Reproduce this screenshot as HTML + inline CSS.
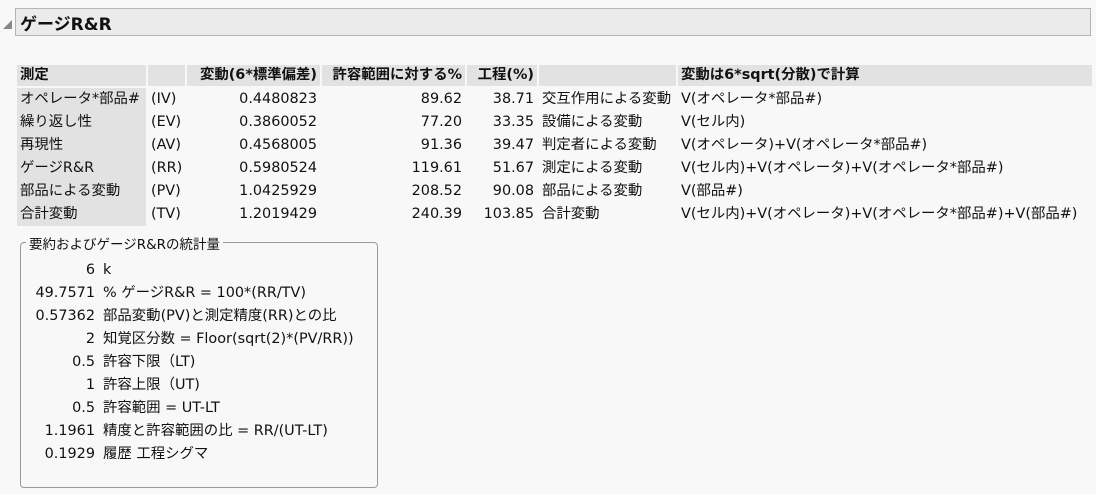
<!DOCTYPE html>
<html><head><meta charset="utf-8"><style>
body{margin:0;width:1096px;height:494px;background:#f8f8f8;font-family:"DejaVu Sans","Noto Sans CJK JP",sans-serif;font-size:14.4px;color:#111;position:relative;overflow:hidden}
.hdr{position:absolute;left:15px;top:8px;width:1076px;height:28px;background:#ebebeb;border:1px solid #b5b5b5;box-sizing:border-box}
.hdr span{position:absolute;left:4px;top:1px;font-weight:bold;font-size:17px}
.tri{position:absolute;left:3px;top:20px;width:0;height:0;border-left:9px solid transparent;border-bottom:9px solid #888}
.c{position:absolute;height:21px;line-height:23px;white-space:nowrap;box-sizing:border-box;padding:0 3px}
.h{background:#e2e2e2;font-weight:bold;top:65px;line-height:21px}
.g{background:#e2e2e2}
.r{text-align:right}
.box{position:absolute;left:20px;top:242px;width:358px;height:246px;border:1px solid #999;border-radius:4px;box-sizing:border-box}
.lg{position:absolute;left:26px;top:233px;background:#f8f8f8;padding:0 3px;font-size:13.5px}
.s{position:absolute;height:20px;line-height:21px;white-space:nowrap}
</style></head><body>
<div class="tri"></div>
<div class="hdr"><span>ゲージR&amp;R</span></div>

<div class="c h" style="left:17px;width:129px">測定</div>
<div class="c h" style="left:148px;width:37px"></div>
<div class="c h r" style="left:187px;width:133px">変動(6*標準偏差)</div>
<div class="c h r" style="left:322px;width:143px">許容範囲に対する%</div>
<div class="c h r" style="left:467px;width:70px">工程(%)</div>
<div class="c h" style="left:539px;width:137px"></div>
<div class="c h" style="left:678px;width:414px">変動は6*sqrt(分散)で計算</div>

<div class="c g" style="left:17px;top:88px;width:129px;height:138px;padding:0"></div>

<div class="c" style="left:17px;top:88px">オペレータ*部品#</div><div class="c" style="left:148px;top:88px">(IV)</div><div class="c r" style="left:187px;top:88px;width:133px">0.4480823</div><div class="c r" style="left:322px;top:88px;width:143px">89.62</div><div class="c r" style="left:467px;top:88px;width:70px">38.71</div><div class="c" style="left:539px;top:88px">交互作用による変動</div><div class="c" style="left:678px;top:88px">V(オペレータ*部品#)</div>

<div class="c" style="left:17px;top:111px">繰り返し性</div><div class="c" style="left:148px;top:111px">(EV)</div><div class="c r" style="left:187px;top:111px;width:133px">0.3860052</div><div class="c r" style="left:322px;top:111px;width:143px">77.20</div><div class="c r" style="left:467px;top:111px;width:70px">33.35</div><div class="c" style="left:539px;top:111px">設備による変動</div><div class="c" style="left:678px;top:111px">V(セル内)</div>

<div class="c" style="left:17px;top:134px">再現性</div><div class="c" style="left:148px;top:134px">(AV)</div><div class="c r" style="left:187px;top:134px;width:133px">0.4568005</div><div class="c r" style="left:322px;top:134px;width:143px">91.36</div><div class="c r" style="left:467px;top:134px;width:70px">39.47</div><div class="c" style="left:539px;top:134px">判定者による変動</div><div class="c" style="left:678px;top:134px">V(オペレータ)+V(オペレータ*部品#)</div>

<div class="c" style="left:17px;top:157px">ゲージR&amp;R</div><div class="c" style="left:148px;top:157px">(RR)</div><div class="c r" style="left:187px;top:157px;width:133px">0.5980524</div><div class="c r" style="left:322px;top:157px;width:143px">119.61</div><div class="c r" style="left:467px;top:157px;width:70px">51.67</div><div class="c" style="left:539px;top:157px">測定による変動</div><div class="c" style="left:678px;top:157px">V(セル内)+V(オペレータ)+V(オペレータ*部品#)</div>

<div class="c" style="left:17px;top:180px">部品による変動</div><div class="c" style="left:148px;top:180px">(PV)</div><div class="c r" style="left:187px;top:180px;width:133px">1.0425929</div><div class="c r" style="left:322px;top:180px;width:143px">208.52</div><div class="c r" style="left:467px;top:180px;width:70px">90.08</div><div class="c" style="left:539px;top:180px">部品による変動</div><div class="c" style="left:678px;top:180px">V(部品#)</div>

<div class="c" style="left:17px;top:203px">合計変動</div><div class="c" style="left:148px;top:203px">(TV)</div><div class="c r" style="left:187px;top:203px;width:133px">1.2019429</div><div class="c r" style="left:322px;top:203px;width:143px">240.39</div><div class="c r" style="left:467px;top:203px;width:70px">103.85</div><div class="c" style="left:539px;top:203px">合計変動</div><div class="c" style="left:678px;top:203px">V(セル内)+V(オペレータ)+V(オペレータ*部品#)+V(部品#)</div>

<div class="box"></div>
<div class="lg">要約およびゲージR&amp;Rの統計量</div>

<div class="s" style="left:20px;top:260px;width:75px;text-align:right">6</div><div class="s" style="left:103px;top:260px">k</div>
<div class="s" style="left:20px;top:283px;width:75px;text-align:right">49.7571</div><div class="s" style="left:103px;top:283px">% ゲージR&amp;R = 100*(RR/TV)</div>
<div class="s" style="left:20px;top:306px;width:75px;text-align:right">0.57362</div><div class="s" style="left:103px;top:306px">部品変動(PV)と測定精度(RR)との比</div>
<div class="s" style="left:20px;top:329px;width:75px;text-align:right">2</div><div class="s" style="left:103px;top:329px">知覚区分数 = Floor(sqrt(2)*(PV/RR))</div>
<div class="s" style="left:20px;top:352px;width:75px;text-align:right">0.5</div><div class="s" style="left:103px;top:352px">許容下限（LT)</div>
<div class="s" style="left:20px;top:375px;width:75px;text-align:right">1</div><div class="s" style="left:103px;top:375px">許容上限（UT)</div>
<div class="s" style="left:20px;top:398px;width:75px;text-align:right">0.5</div><div class="s" style="left:103px;top:398px">許容範囲 = UT-LT</div>
<div class="s" style="left:20px;top:421px;width:75px;text-align:right">1.1961</div><div class="s" style="left:103px;top:421px">精度と許容範囲の比 = RR/(UT-LT)</div>
<div class="s" style="left:20px;top:444px;width:75px;text-align:right">0.1929</div><div class="s" style="left:103px;top:444px">履歴 工程シグマ</div>
</body></html>
